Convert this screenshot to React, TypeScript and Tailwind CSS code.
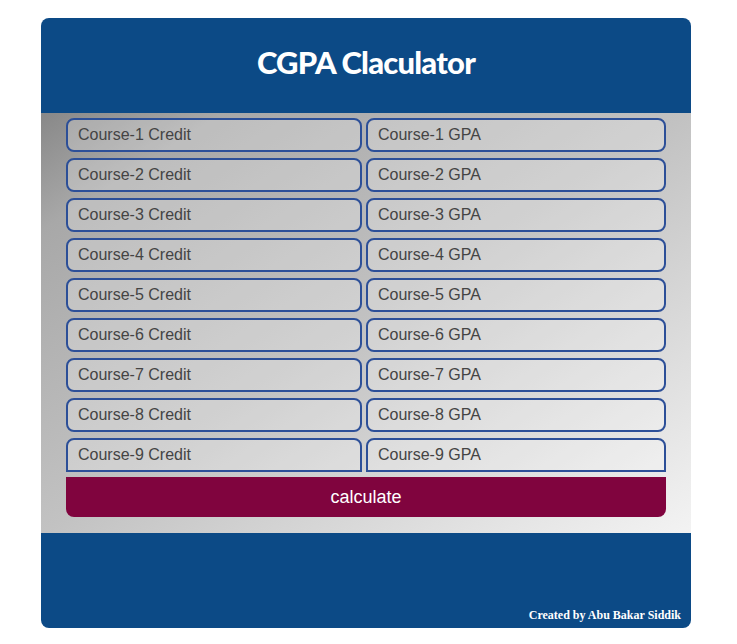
const rows = [1, 2, 3, 4, 5, 6, 7, 8, 9];

export default function App() {
  return (
    <main className="min-h-screen bg-white pt-[18px] pl-[41px] font-['Liberation_Sans',Arial,sans-serif]">
      <div className="w-[650px] overflow-hidden rounded-lg">
        <header className="flex h-[95px] items-center justify-center bg-[#0c4a86]">
          <h1 className="pb-[6px] font-['Lato',sans-serif] text-[31px] font-black tracking-tight text-white">
            CGPA Claculator
          </h1>
        </header>

        <section className="h-[420px] bg-[linear-gradient(to_bottom_right,#888888_0%,#a8a8a8_14%,#c2c2c2_50%,#f3f3f3_100%)] px-[25px] pt-[5px]">
          <div className="flex flex-col gap-[6px]">
            {rows.map((n) => {
              const last = n === rows.length;
              return (
                <div key={n} className="flex gap-[4px]">
                  <input
                    placeholder={`Course-${n} Credit`}
                    className={`h-[34px] w-[296px] border-2 border-[#2c4f98] bg-white/25 px-[10px] text-[16px] text-[#333] outline-none placeholder:text-[#444] ${last ? "rounded-t-lg" : "rounded-lg"}`}
                  />
                  <input
                    placeholder={`Course-${n} GPA`}
                    className={`h-[34px] w-[300px] border-2 border-[#2c4f98] bg-white/25 px-[10px] text-[16px] text-[#333] outline-none placeholder:text-[#444] ${last ? "rounded-t-lg" : "rounded-lg"}`}
                  />
                </div>
              );
            })}
          </div>
          <button className="mt-[5px] h-[40px] w-[600px] rounded-b-lg bg-[#80043e] text-[18px] text-white">
            calculate
          </button>
        </section>

        <footer className="flex h-[95px] items-end justify-end bg-[#0c4a86] px-[10px] pb-[4px]">
          <p className="font-['Liberation_Serif',serif] text-[12px] font-bold text-white">
            Created by Abu Bakar Siddik
          </p>
        </footer>
      </div>
    </main>
  );
}
